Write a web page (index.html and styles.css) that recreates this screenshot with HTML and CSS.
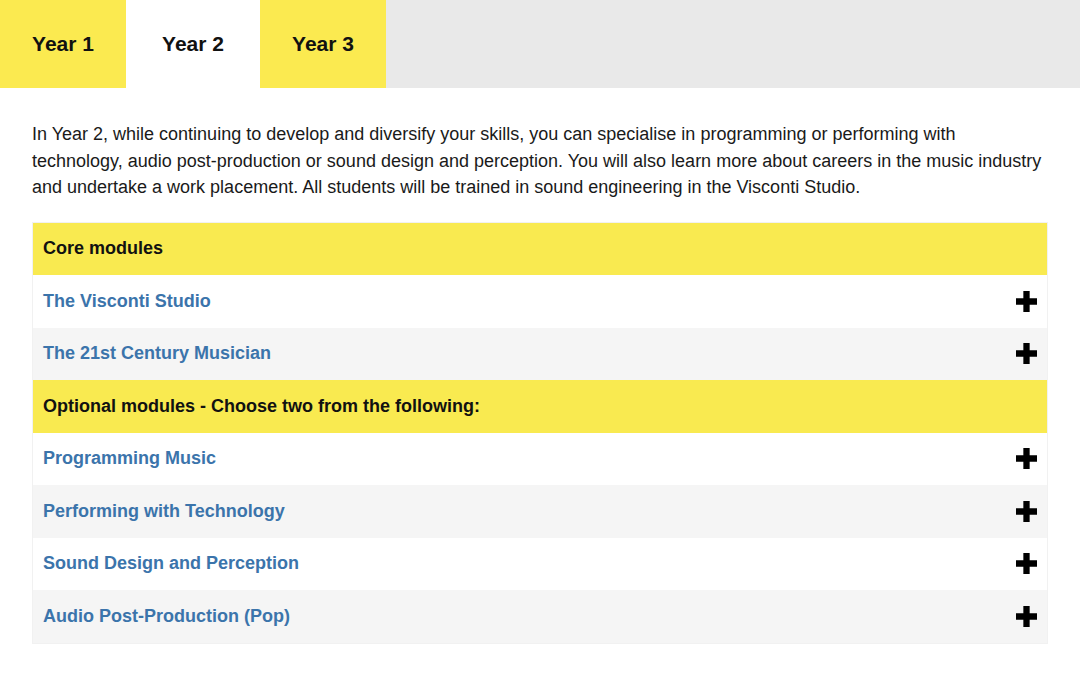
FILE: index.html
```html
<!DOCTYPE html>
<html lang="en">
<head>
  <meta charset="UTF-8" />
  <title>Course modules</title>
  <link rel="stylesheet" href="styles.css">
</head>
<body>
  <div class="tabs">
    <div class="tab">Year 1</div>
    <div class="tab active">Year 2</div>
    <div class="tab">Year 3</div>
    <div class="tab-fill"></div>
  </div>
  <div class="content">
    <p class="intro">In Year 2, while continuing to develop and diversify your skills, you can specialise in programming or performing with technology, audio post-production or sound design and perception. You will also learn more about careers in the music industry and undertake a work placement. All students will be trained in sound engineering in the Visconti Studio.</p>
    <div class="modules">
      <div class="group-head">Core modules</div>
      <div class="module"><span>The Visconti Studio</span><svg class="plus" viewBox="0 0 20 20"><path d="M7 0h6v7h7v6h-7v7h-6v-7h-7v-6h7z"/></svg></div>
      <div class="module alt"><span>The 21st Century Musician</span><svg class="plus" viewBox="0 0 20 20"><path d="M7 0h6v7h7v6h-7v7h-6v-7h-7v-6h7z"/></svg></div>
      <div class="group-head">Optional modules - Choose two from the following:</div>
      <div class="module"><span>Programming Music</span><svg class="plus" viewBox="0 0 20 20"><path d="M7 0h6v7h7v6h-7v7h-6v-7h-7v-6h7z"/></svg></div>
      <div class="module alt"><span>Performing with Technology</span><svg class="plus" viewBox="0 0 20 20"><path d="M7 0h6v7h7v6h-7v7h-6v-7h-7v-6h7z"/></svg></div>
      <div class="module"><span>Sound Design and Perception</span><svg class="plus" viewBox="0 0 20 20"><path d="M7 0h6v7h7v6h-7v7h-6v-7h-7v-6h7z"/></svg></div>
      <div class="module alt"><span>Audio Post-Production (Pop)</span><svg class="plus" viewBox="0 0 20 20"><path d="M7 0h6v7h7v6h-7v7h-6v-7h-7v-6h7z"/></svg></div>
    </div>
  </div>
</body>
</html>
```

FILE: styles.css
```css
body {
  margin: 0;
  font-family: 'Liberation Sans', Arial, sans-serif;
  background-color: #ffffff;
  color: #111111;
}
.tabs {
  display: flex;
  height: 88px;
}
.tab {
  display: flex;
  align-items: center;
  justify-content: center;
  background-color: #fbea50;
  font-size: 21px;
  font-weight: bold;
  width: 126px;
}
.tab.active {
  background-color: #ffffff;
  width: 134px;
}
.tab-fill {
  flex: 1;
  background-color: #e9e9e9;
}
.content {
  padding: 0 32px;
}
.intro {
  margin: 33px 0 21px;
  font-size: 18px;
  line-height: 26.5px;
  color: #1a1a1a;
}
.modules {
  border: 1px solid #f1f1f1;
}
.group-head {
  display: flex;
  align-items: center;
  height: 52.5px;
  padding: 0 10px;
  background-color: #f9ea50;
  font-size: 18px;
  font-weight: bold;
}
.module {
  display: flex;
  align-items: center;
  justify-content: space-between;
  height: 52.5px;
  padding: 0 10px;
  background-color: #ffffff;
  font-size: 18px;
  font-weight: bold;
  color: #3b74ab;
}
.module.alt {
  background-color: #f5f5f5;
}
.plus {
  width: 21px;
  height: 21px;
  fill: #000000;
}
```
